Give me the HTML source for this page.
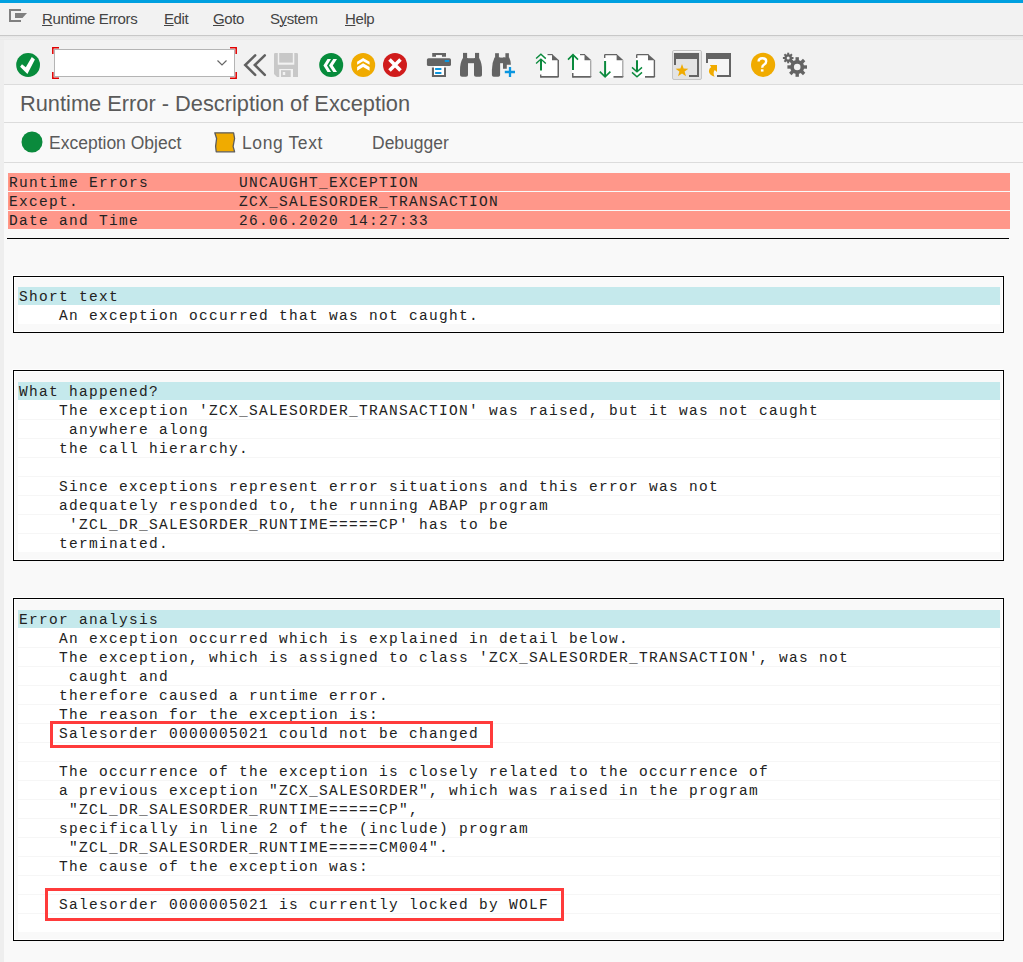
<!DOCTYPE html>
<html><head><meta charset="utf-8">
<style>
*{margin:0;padding:0;box-sizing:border-box}
html,body{width:1023px;height:962px;overflow:hidden;background:#f9f9f9;position:relative}
body{font-family:"Liberation Sans",sans-serif}
.abs{position:absolute}
#blue{left:0;top:0;width:1023px;height:3px;background:#00a0e0}
#menu{left:0;top:3px;width:1023px;height:32px;background:#f2f2f2}
#menuline{left:0;top:35px;width:1023px;height:5px;background:linear-gradient(#c8c8c8 0,#c8c8c8 1px,#e6e6e6 1px,#efefef 4px,#eaeaea 4px,#eaeaea 5px)}
#strip{left:0;top:40px;width:4px;height:926px;background:#eeeeee}
#toolbar{left:4px;top:40px;width:1019px;height:44px;background:#f2f2f2}
.hl{position:absolute;left:4px;width:1019px;height:1px;background:#dcdcdc}
.mi{position:absolute;top:7px;font-size:15px;letter-spacing:-0.4px;color:#444;white-space:nowrap}
.mi u{text-decoration:underline;text-underline-offset:1px;text-decoration-thickness:1px}
#title{left:20px;top:91px;font-size:21.8px;color:#5a5a5a;white-space:nowrap}
.at{position:absolute;top:133px;font-size:17.5px;color:#5a5a5a;white-space:nowrap}
.mono{font-family:"Liberation Mono",monospace;font-size:14.5px;letter-spacing:1.3px;line-height:19px;color:#222;white-space:pre;padding-top:2px}
.rrow{position:absolute;left:8px;width:1002px;height:18px;background:#ff978a}
.box{position:absolute;left:13px;width:991px;border:1px solid #000;box-shadow:-1px -1px 0 0 #fff, inset 0 0 0 1px #fff}
.rows{position:absolute;left:18px;width:982px}
.cy{position:absolute;left:18px;width:982px;height:18px;background:#c5e9ec}
.wr{position:absolute;left:18px;width:982px;background:#fff}
.sep{position:absolute;left:18px;width:982px;height:1px;background:#f6f6f6}
.txt{position:absolute;left:19px}
.redbox{position:absolute;border:3px solid #ff3b3b}
</style></head><body>
<div id="blue" class="abs"></div>
<div id="menu" class="abs">
  <svg class="abs" style="left:9px;top:6px" width="19" height="14" viewBox="0 0 19 14">
    <path d="M0 0h12v2H2v9h10v2H0z" fill="#808080"/>
    <path d="M6 4h12l-4.5 5H6z" fill="#808080"/>
  </svg>
  <div class="mi" style="left:42px"><u>R</u>untime Errors</div>
  <div class="mi" style="left:164px"><u>E</u>dit</div>
  <div class="mi" style="left:213px"><u>G</u>oto</div>
  <div class="mi" style="left:270px">S<u>y</u>stem</div>
  <div class="mi" style="left:345px"><u>H</u>elp</div>
</div>
<div id="menuline" class="abs"></div>
<div id="strip" class="abs"></div>
<div id="toolbar" class="abs"></div>
<div class="hl" style="top:84px"></div>
<svg class="abs" style="left:0;top:0" width="1023" height="90" viewBox="0 0 1023 90">
 <!-- enter check -->
 <circle cx="28.1" cy="65" r="11.9" fill="#078c3c"/>
 <path d="M20.1 66.8 L22 64.2 L25.8 67.2 L31.8 57 L34.9 59.6 L27.4 74 Z" fill="#fff"/>
 <!-- command field -->
 <rect x="54.5" y="49.5" width="180" height="27" fill="#fff" stroke="#b4b4b4" stroke-width="1"/>
 <path d="M217.5 60.5 L222 65 L226.5 60.5" fill="none" stroke="#666" stroke-width="1.2"/>
 <path d="M59 47.8 H52.8 V54 M52.8 72 V78.2 H59 M230 47.8 H236.2 V54 M236.2 72 V78.2 H230" fill="none" stroke="#e00000" stroke-width="1.5"/>
 <!-- << -->
 <path d="M255.2 55.3 L245.2 65 L255.2 74.9 M264.8 55.3 L254.8 65 L264.8 74.9" fill="none" stroke="#616161" stroke-width="2.5" stroke-linecap="round" stroke-linejoin="miter"/>
 <!-- save disabled -->
 <g transform="translate(274,53)">
  <path d="M0 1.2 Q0 0 1.2 0 H22.8 Q24 0 24 1.2 V24 H3 L0 21 Z" fill="#c8c8c8"/>
  <rect x="3.8" y="0" width="16.5" height="11.7" fill="#f2f2f2"/>
  <rect x="5.2" y="0" width="13.6" height="9.6" fill="#c8c8c8"/>
  <rect x="5.2" y="16" width="13.8" height="8" fill="#f2f2f2"/>
  <rect x="7" y="17.2" width="9.7" height="6.8" fill="#c8c8c8"/>
  <rect x="8.8" y="19" width="2.4" height="3" fill="#f2f2f2"/>
 </g>
 <!-- back green -->
 <circle cx="331.2" cy="65" r="12" fill="#078c3c"/>
 <path d="M323.4 65.5 L327.5 59.1 L331 59.1 L327 65.5 L331 71.9 L327.5 71.9 Z M329 65.5 L333.3 59.1 L337 59.1 L332.8 65.5 L337 71.9 L333.3 71.9 Z" fill="#fff"/>
 <!-- exit orange -->
 <circle cx="363.2" cy="65" r="12" fill="#f0ab00"/>
 <path d="M363.1 58 L369.6 61.8 L369.6 64.8 L363.1 61.3 L357.1 64.8 L357.1 61.8 Z M363.1 63.3 L369.6 66.9 L369.6 70.7 L363.1 67 L357.1 70.7 L357.1 66.9 Z" fill="#fff"/>
 <!-- cancel red -->
 <circle cx="395" cy="65" r="12" fill="#d01c1c"/>
 <path d="M389.5 59.5 L400.5 70.5 M400.5 59.5 L389.5 70.5" fill="none" stroke="#fff" stroke-width="3.6"/>
 <!-- printer -->
 <g fill="#646464">
  <path d="M432.2 52.9 H446 V56.7 H441.9 V55.3 H436 V56.7 H432.2 Z"/>
  <rect x="426.9" y="58.2" width="24.1" height="7.9" rx="1.6"/>
  <path d="M431.9 67.6 H434 V75 H444 V67.6 H446 V77 H431.9 Z"/>
  <rect x="434" y="66.1" width="10" height="8.9" fill="#fff"/>
  <rect x="436" y="55.3" width="5.9" height="1.4" fill="#fff"/>
 </g>
 <rect x="444.8" y="60" width="4.4" height="2" fill="#0a96e0"/>
 <rect x="434.9" y="67.9" width="6.7" height="2" rx="1" fill="#0a96e0"/>
 <rect x="434.9" y="72" width="6.7" height="2" rx="1" fill="#0a96e0"/>
 <!-- binoculars -->
 <g fill="#646464">
  <rect x="463" y="52.9" width="4.1" height="6"/>
  <rect x="475" y="52.9" width="4.1" height="6"/>
  <rect x="467" y="58.2" width="8.5" height="5"/>
  <path d="M462.7 58.2 H468 V75 Q468 76.8 466 76.8 H462 Q460 76.8 460 75 V70 Q460 63 462.7 58.2 Z"/>
  <path d="M474 58.2 H479.3 Q482 63 482 70 V75 Q482 76.8 480 76.8 H476 Q474 76.8 474 75 Z"/>
 </g>
 <!-- binoculars + -->
 <g fill="#646464">
  <rect x="495.1" y="53.2" width="3.8" height="5"/>
  <rect x="505.4" y="53.2" width="3.5" height="5"/>
  <rect x="499" y="57.6" width="6" height="5.6"/>
  <path d="M494.5 57.6 H500.1 V75 Q500.1 76.7 498.3 76.7 H493.7 Q491.9 76.7 491.9 75 V70 Q491.9 63 494.5 57.6 Z"/>
  <path d="M503 57.6 H509.2 Q510.9 61 510.9 64.7 H506.8 V68.8 H503 Z"/>
 </g>
 <path d="M504.8 72 H515 M510 67 V77" stroke="#0a96e0" stroke-width="2.3"/>
</svg>
<svg class="abs" style="left:0;top:0" width="1023" height="90" viewBox="0 0 1023 90">
 <!-- page icon 1 -->
 <path d="M540 54 H552 L559 60.3 V77.8 H540 Z" fill="#fff"/>
 <g fill="#646464">
  <rect x="547.5" y="54" width="5" height="1.2"/>
  <path d="M552 54 L559 60.3 H552 Z"/>
  <rect x="557.5" y="60" width="1.5" height="17"/>
  <path d="M540 76 H559 V76.5 Q559 77.8 557.7 77.8 H541.3 Q540 77.8 540 76.5 Z"/>
  <rect x="540" y="74.5" width="1.4" height="3"/>
 </g>
 <path d="M541 70.6 V59.5" stroke="#0b8a3d" stroke-width="2"/><path d="M536.1 58.6 L540.9 54.3 L545.8 58.6 M536.1 63.6 L540.9 59.1 L545.8 63.6" fill="none" stroke="#0b8a3d" stroke-width="1.4"/>
 <!-- page icon 2 -->
 <path d="M572 54 H584.5 L591.4 60.3 V77.8 H572 Z" fill="#fff"/>
 <g fill="#646464">
  <rect x="580" y="54" width="5" height="1.2"/>
  <path d="M584.5 54 L591.4 60.3 H584.5 Z"/>
  <path d="M572 76 H591.4 V76.5 Q591.4 77.8 590 77.8 H573.3 Q572 77.8 572 76.5 Z"/>
  <rect x="572" y="73" width="1.5" height="4.5"/>
 </g>
 <rect x="590" y="60.3" width="1.4" height="16" fill="#a8a8a8"/>
 <path d="M573 70 V55.5" stroke="#0b8a3d" stroke-width="2"/><path d="M568 59.6 L573 54.6 L578 59.6" fill="none" stroke="#0b8a3d" stroke-width="1.6"/>
 <!-- page icon 3 -->
 <path d="M604 54 H616.6 L623.5 60.3 V77.8 H604 Z" fill="#fff"/>
 <g fill="#646464">
  <path d="M604 58 V55.3 Q604 54 605.3 54 H617 V55.2 H605.4 V58 Z"/>
  <path d="M616.6 54 L623.5 60.3 H616.6 Z"/>
  <path d="M613.5 76 H623.5 V76.5 Q623.5 77.8 622.2 77.8 H613.5 Z"/>
 </g>
 <rect x="622.1" y="60.3" width="1.4" height="16" fill="#a8a8a8"/>
 <path d="M605.1 61 V76" stroke="#0b8a3d" stroke-width="2"/><path d="M599.8 71.6 L605.1 76.9 L610.4 71.6" fill="none" stroke="#0b8a3d" stroke-width="1.6"/>
 <!-- page icon 4 -->
 <path d="M636 54 H648 L655.1 60.3 V77.8 H636 Z" fill="#fff"/>
 <g fill="#646464">
  <path d="M636 58 V55.3 Q636 54 637.3 54 H648.5 V55.2 H637.4 V58 Z"/>
  <path d="M648 54 L655.1 60.3 H648 Z"/>
  <rect x="653.7" y="60" width="1.4" height="17"/>
  <path d="M645 76 H655.1 V76.5 Q655.1 77.8 653.8 77.8 H645 Z"/>
 </g>
 <path d="M637 60.3 V71" stroke="#0b8a3d" stroke-width="2"/><path d="M632 67.4 L637 71.8 L642 67.4 M632 72.4 L637 76.8 L642 72.4" fill="none" stroke="#0b8a3d" stroke-width="1.4"/>
 <!-- layout 1 (pressed) -->
 <rect x="672.5" y="50.5" width="29" height="29" rx="1.5" fill="#e3e3e3" stroke="#c4c4c4" stroke-width="1"/>
 <rect x="673.5" y="51.3" width="27" height="1" fill="#fff"/>
 <g fill="#646464">
  <rect x="674" y="53" width="25" height="6"/>
  <rect x="674" y="59" width="2" height="6"/>
  <rect x="697" y="59" width="2" height="18"/>
  <rect x="689" y="75" width="10" height="2"/>
 </g>
 <path d="M682 64 L683.6 68.5 L688.4 68.7 L684.6 71.6 L686 76.2 L682 73.5 L678 76.2 L679.4 71.6 L675.6 68.7 L680.4 68.5 Z" fill="#f0ab00"/>
 <!-- layout 2 -->
 <g fill="#646464">
  <rect x="706" y="53" width="25" height="6"/>
  <rect x="706" y="59" width="2" height="4"/>
  <rect x="729" y="59" width="2" height="18"/>
  <rect x="717" y="75" width="14" height="2"/>
 </g>
 <rect x="708" y="59" width="21" height="16" fill="#f5f5f5"/>
 <path d="M709.8 65 L717 65 L717 72 L714.7 69.9 Q712.6 72.6 714.6 76.8 Q709 74.8 708.9 71.2 Q708.9 68.6 711.2 67 Z" fill="#f0ab00"/>
 <!-- help -->
 <circle cx="763.1" cy="64.8" r="12.1" fill="#f0ab00"/>
 <path d="M758.6 61.6 Q758.6 58.3 762.3 58.3 Q766.2 58.3 766.2 61.3 Q766.2 63.3 764.2 64.5 Q762.2 65.6 762.2 67.8" fill="none" stroke="#fff" stroke-width="2.4"/>
 <rect x="760.9" y="69.3" width="2.6" height="2.3" fill="#fff"/>
 <!-- gear -->
 <g fill="#646464">
  <circle cx="797.2" cy="67" r="7"/>
  <rect x="795.5" y="57.2" width="3.4" height="19.6"/>
  <rect x="787.4" y="65.3" width="19.6" height="3.4"/>
  <rect x="795.5" y="57.2" width="3.4" height="19.6" transform="rotate(45 797.2 67)"/>
  <rect x="795.5" y="57.2" width="3.4" height="19.6" transform="rotate(-45 797.2 67)"/>
  <circle cx="788.2" cy="58" r="3.8"/>
  <rect x="787.2" y="52.7" width="2" height="10.6"/>
  <rect x="782.9" y="57" width="10.6" height="2"/>
  <rect x="787.2" y="52.7" width="2" height="10.6" transform="rotate(45 788.2 58)"/>
  <rect x="787.2" y="52.7" width="2" height="10.6" transform="rotate(-45 788.2 58)"/>
 </g>
 <circle cx="797.2" cy="67" r="3.3" fill="#f2f2f2"/>
 <circle cx="788.2" cy="58" r="1.5" fill="#f2f2f2"/>
</svg>

<div id="title" class="abs">Runtime Error - Description of Exception</div>
<div class="hl" style="top:122px"></div>
<div class="hl" style="top:162px"></div>

<!-- app toolbar -->
<svg class="abs" style="left:21px;top:131px" width="22" height="22"><circle cx="11" cy="11" r="10.5" fill="#0a8a3c"/></svg>
<div class="at" style="left:49px">Exception Object</div>
<svg class="abs" style="left:208px;top:126px" width="34" height="32" viewBox="208 126 34 32"><path d="M214.8 132.8 H233.6 L234.6 138.5 L233.1 146.3 L234.6 151.8 H216.2 L215.6 146.3 L216.6 138.5 Z" fill="#f0ab00" stroke="#5c5c5c" stroke-width="1.3" stroke-linejoin="round"/></svg>
<div class="at" style="left:242px;letter-spacing:0.6px">Long Text</div>
<div class="at" style="left:372px">Debugger</div>

<!-- header red rows -->
<div class="rrow" style="top:173px"></div>
<div class="rrow" style="top:192px"></div>
<div class="rrow" style="top:211px"></div>
<div class="mono abs" style="left:9px;top:172px">Runtime Errors         UNCAUGHT_EXCEPTION
Except.                ZCX_SALESORDER_TRANSACTION
Date and Time          26.06.2020 14:27:33</div>
<div class="abs" style="left:7px;top:238px;width:1002px;height:1px;background:#000"></div>

<div class="box" style="top:276px;height:57px"></div>
<div class="cy" style="top:287px"></div>
<div class="wr" style="top:305px;height:19px"></div>
<div class="mono txt" style="top:286px">Short text
    An exception occurred that was not caught.</div>
<div class="box" style="top:370px;height:191px"></div>
<div class="cy" style="top:382px"></div>
<div class="wr" style="top:400px;height:152px"></div>
<div class="sep" style="top:419px"></div>
<div class="sep" style="top:438px"></div>
<div class="sep" style="top:457px"></div>
<div class="sep" style="top:476px"></div>
<div class="sep" style="top:495px"></div>
<div class="sep" style="top:514px"></div>
<div class="sep" style="top:533px"></div>
<div class="mono txt" style="top:381px">What happened?
    The exception 'ZCX_SALESORDER_TRANSACTION' was raised, but it was not caught
     anywhere along
    the call hierarchy.

    Since exceptions represent error situations and this error was not
    adequately responded to, the running ABAP program
     'ZCL_DR_SALESORDER_RUNTIME=====CP' has to be
    terminated.</div>
<div class="box" style="top:598px;height:343px"></div>
<div class="cy" style="top:610px"></div>
<div class="wr" style="top:628px;height:304px"></div>
<div class="sep" style="top:647px"></div>
<div class="sep" style="top:666px"></div>
<div class="sep" style="top:685px"></div>
<div class="sep" style="top:704px"></div>
<div class="sep" style="top:723px"></div>
<div class="sep" style="top:742px"></div>
<div class="sep" style="top:761px"></div>
<div class="sep" style="top:780px"></div>
<div class="sep" style="top:799px"></div>
<div class="sep" style="top:818px"></div>
<div class="sep" style="top:837px"></div>
<div class="sep" style="top:856px"></div>
<div class="sep" style="top:875px"></div>
<div class="sep" style="top:894px"></div>
<div class="sep" style="top:913px"></div>
<div class="mono txt" style="top:609px">Error analysis
    An exception occurred which is explained in detail below.
    The exception, which is assigned to class 'ZCX_SALESORDER_TRANSACTION', was not
     caught and
    therefore caused a runtime error.
    The reason for the exception is:
    Salesorder 0000005021 could not be changed

    The occurrence of the exception is closely related to the occurrence of
    a previous exception "ZCX_SALESORDER", which was raised in the program
     "ZCL_DR_SALESORDER_RUNTIME=====CP",
    specifically in line 2 of the (include) program
     "ZCL_DR_SALESORDER_RUNTIME=====CM004".
    The cause of the exception was:

    Salesorder 0000005021 is currently locked by WOLF
</div>
<div class="redbox" style="left:50px;top:721px;width:443px;height:27px"></div>
<div class="redbox" style="left:45px;top:888px;width:519px;height:33px"></div>

</body></html>
